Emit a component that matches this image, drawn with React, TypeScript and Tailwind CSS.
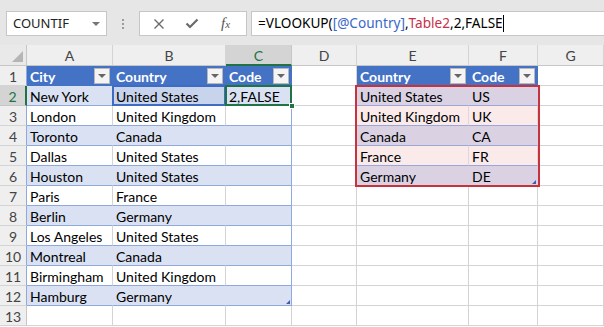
import React from 'react';

const COL_LETTERS = ['', 'A', 'B', 'C', 'D', 'E', 'F', 'G'];

const TABLE1: string[][] = [
  ['City', 'Country', 'Code'],
  ['New York', 'United States', '2,FALSE'],
  ['London', 'United Kingdom', ''],
  ['Toronto', 'Canada', ''],
  ['Dallas', 'United States', ''],
  ['Houston', 'United States', ''],
  ['Paris', 'France', ''],
  ['Berlin', 'Germany', ''],
  ['Los Angeles', 'United States', ''],
  ['Montreal', 'Canada', ''],
  ['Birmingham', 'United Kingdom', ''],
  ['Hamburg', 'Germany', ''],
];

const TABLE2: string[][] = [
  ['Country', 'Code'],
  ['United States', 'US'],
  ['United Kingdom', 'UK'],
  ['Canada', 'CA'],
  ['France', 'FR'],
  ['Germany', 'DE'],
];

function FilterButton() {
  return (
    <div className="absolute right-[2px] top-[2px] w-[16px] h-[16px] bg-[#f4f4f4] border border-[#b8b8b8] flex items-center justify-center">
      <div className="w-0 h-0 border-l-[4px] border-r-[4px] border-t-[4px] border-l-transparent border-r-transparent border-t-[#666]" />
    </div>
  );
}

function cellText(r: number, c: number): string {
  if (r >= 1 && r <= 12 && c >= 1 && c <= 3) return TABLE1[r - 1][c - 1];
  if (r >= 1 && r <= 6 && (c === 5 || c === 6)) return TABLE2[r - 1][c - 5];
  return '';
}

function cellClass(r: number, c: number): string {
  const base = 'relative flex items-center px-[3px] pt-px whitespace-nowrap border-r border-b';
  // column headers
  if (r === 0) {
    if (c === 0) return `${base} bg-[#e9e9e9] border-r-[#c6c6c6] border-b-[#c6c6c6]`;
    if (c === 3) return `${base} justify-center bg-[#d4d4d4] text-[#217346] border-r-[#c6c6c6] border-b-2 border-b-[#217346]`;
    return `${base} justify-center bg-[#efefef] text-[#444] border-r-[#d4d4d4] border-b-[#c6c6c6]`;
  }
  // row headers
  if (c === 0) {
    if (r === 2) return `${base} justify-center bg-[#d4d4d4] text-[#217346] border-r-2 border-r-[#217346] border-b-[#c6c6c6]`;
    if (r <= 12) return `${base} justify-center bg-[#efefef] text-[#444] border-r-[#8ea9db] border-b-[#d4d4d4]`;
    return `${base} justify-center bg-[#efefef] text-[#444] border-r-[#c6c6c6] border-b-[#d4d4d4]`;
  }
  // table 1
  if (c >= 1 && c <= 3 && r <= 12) {
    if (r === 1) return `${base} bg-[#4472c4] text-white font-bold border-r-[#4472c4] border-b-[#4472c4]`;
    if (r === 2 && c === 2) return `${base} bg-[#c8d4ec] border-r-[#d9e1f2] border-b-[#8ea9db]`;
    if (r % 2 === 0) {
      return c === 3
        ? `${base} bg-[#d9e1f2] border-r-[#8ea9db] border-b-[#8ea9db]`
        : `${base} bg-[#d9e1f2] border-r-[#d9e1f2] border-b-[#8ea9db]`;
    }
    return c === 3
      ? `${base} bg-white border-r-[#8ea9db] border-b-[#8ea9db]`
      : `${base} bg-white border-r-[#d4d4d4] border-b-[#8ea9db]`;
  }
  // table 2
  if ((c === 5 || c === 6) && r <= 6) {
    if (r === 1) return `${base} bg-[#4472c4] text-white font-bold border-r-[#4472c4] border-b-[#4472c4]`;
    if (r % 2 === 0) return `${base} bg-[#dad2e3] border-r-[#dad2e3] border-b-[#9ba6da]`;
    return `${base} bg-[#fbeaea] border-r-[#e2d6da] border-b-[#9ba6da]`;
  }
  return `${base} bg-white border-r-[#d4d4d4] border-b-[#d4d4d4]`;
}

function Cell({ r, c }: { r: number; c: number }) {
  const text = r === 0 ? COL_LETTERS[c] : c === 0 ? String(r) : cellText(r, c);
  const isTableHeader = r === 1 && ((c >= 1 && c <= 3) || c === 5 || c === 6);
  return (
    <div className={cellClass(r, c)}>
      <span className="relative z-10">{text}</span>
      {r === 0 && c === 0 && (
        <svg width="11" height="11" viewBox="0 0 11 11" className="absolute right-[3px] bottom-[3px]">
          <path d="M11 0 L11 11 L0 11 Z" fill="#b5b5b5" />
        </svg>
      )}
      {isTableHeader && <FilterButton />}
      {r === 2 && c === 2 && (
        <div className="absolute -left-[1px] -top-[1px] -right-[1px] -bottom-[1px] border-2 border-[#3d6cc2]" />
      )}
      {r === 2 && c === 3 && (
        <>
          <div className="absolute -left-[1px] -top-[1px] -right-[1px] -bottom-[1px] border-2 border-[#217346]" />
          <div className="absolute -right-[4px] -bottom-[4px] w-[6px] h-[6px] bg-[#217346] border border-white z-20" />
        </>
      )}
      {((r === 12 && c === 3) || (r === 6 && c === 6)) && (
        <svg width="4" height="4" viewBox="0 0 4 4" className="absolute right-[1px] bottom-[1px]">
          <path d="M4 0 L4 4 L0 4 Z" fill="#3a5fa8" />
        </svg>
      )}
    </div>
  );
}

export default function App() {
  const rows = Array.from({ length: 14 }, (_, r) => r);
  const cols = Array.from({ length: 8 }, (_, c) => c);

  return (
    <div className="w-[604px] h-[327px] overflow-hidden bg-white font-['Lato','Liberation_Sans',sans-serif] text-[14px] text-black">
      {/* formula bar */}
      <div className="h-[45px] bg-[#e6e6e6] flex items-start pt-[11px] pl-[6px] font-['Noto_Sans','Liberation_Sans',sans-serif] text-[13px]">
        <div className="w-[101px] h-[25px] bg-white border border-[#c6c6c6] flex items-center justify-between pl-[6px] pr-[6px]">
          <span className="text-[#222]">COUNTIF</span>
          <div className="w-0 h-0 border-l-[4px] border-r-[4px] border-t-[4px] border-l-transparent border-r-transparent border-t-[#777]" />
        </div>
        <div className="w-[32px] h-[25px] flex flex-col items-center justify-center gap-[2px]">
          <div className="w-[2px] h-[2px] bg-[#9a9a9a]" />
          <div className="w-[2px] h-[2px] bg-[#9a9a9a]" />
          <div className="w-[2px] h-[2px] bg-[#9a9a9a]" />
        </div>
        <div className="w-[108px] h-[25px] bg-white border border-[#c6c6c6] flex items-center">
          <svg width="12" height="12" viewBox="0 0 12 12" className="ml-[13px]">
            <path d="M1.5 1.5 L10.5 10.5 M10.5 1.5 L1.5 10.5" stroke="#6a6a6a" strokeWidth="1.4" fill="none" />
          </svg>
          <svg width="14" height="11" viewBox="0 0 14 11" className="ml-[20px]">
            <path d="M1.5 5.5 L5 9 L12.5 1.5" stroke="#6a6a6a" strokeWidth="2.2" fill="none" />
          </svg>
          <span className="ml-[22px] font-['Liberation_Serif',serif] italic text-[15px] text-[#555] leading-none">
            f<span className="text-[11px]">x</span>
          </span>
        </div>
        <div className="ml-[4px] flex-1 h-[25px] bg-white border border-r-0 border-[#c6c6c6] flex items-center pl-[6px] text-[13.6px] whitespace-nowrap">
          <span>=VLOOKUP(</span>
          <span className="text-[#3a68c8]">[@Country]</span>
          <span>,</span>
          <span className="text-[#c8304a]">Table2</span>
          <span>,2,FALSE</span>
          <span className="w-px h-[17px] bg-black" />
        </div>
      </div>

      {/* grid */}
      <div className="relative grid grid-cols-[27px_86px_113px_66px_65px_112px_69px_66px] grid-rows-[21px_repeat(13,20px)]">
        {rows.map((r) => cols.map((c) => <Cell key={`${r}-${c}`} r={r} c={c} />))}
        <div className="absolute left-[355px] top-[40px] w-[185px] h-[102px] border-2 border-[#c8323c] pointer-events-none z-20" />
      </div>
    </div>
  );
}
